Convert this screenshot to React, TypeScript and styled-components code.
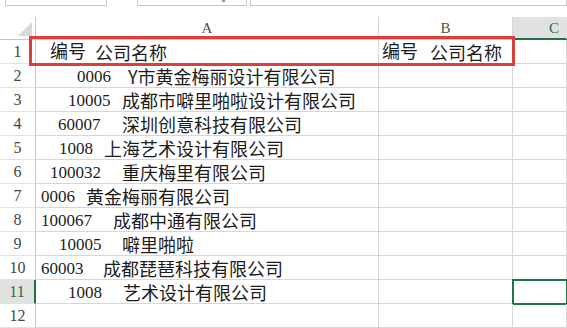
import React from 'react';
import styled, { createGlobalStyle } from 'styled-components';

const GlobalStyle = createGlobalStyle`
  html, body {
    margin: 0;
    padding: 0;
    background: #ffffff;
    overflow: hidden;
  }
`;

const green = '#217346';
const gridLine = '#d6d6d8';

const Page = styled.div`
  width: 567px;
  height: 328px;
  overflow: hidden;
  background: #ffffff;
  display: flex;
  flex-direction: column;
`;

const FormulaStrip = styled.div`
  display: flex;
  height: 6px;
  margin-bottom: 11px;
  flex-shrink: 0;
`;

const BarBox = styled.div<{ $left: number; $width?: number }>`
  margin-left: ${(p) => p.$left}px;
  width: ${(p) => (p.$width ? `${p.$width}px` : 'auto')};
  flex: ${(p) => (p.$width ? '0 0 auto' : '1')};
  border: 1px solid #c8c8c8;
  border-top: none;
  box-sizing: border-box;
  display: flex;
  align-items: flex-start;
`;

const Grip = styled.span`
  margin-left: 84px;
  width: 3px;
  height: 2px;
  background: #9a9a9a;
`;

const Sheet = styled.div`
  position: relative;
  display: grid;
  grid-template-columns: 36px 343px 134px 1fr;
  grid-template-rows: 23px repeat(12, 24px);
`;

const Corner = styled.div`
  border-right: 1px solid #c6c6c6;
  border-bottom: 1px solid #c6c6c6;
  box-sizing: border-box;
  display: flex;
  align-items: flex-end;
  justify-content: flex-end;
  padding: 0 2px 2px 0;
`;

const ColHeader = styled.div<{ $active?: boolean }>`
  box-sizing: border-box;
  background: ${(p) => (p.$active ? '#e1e1e1' : '#ffffff')};
  border-right: 1px solid ${(p) => (p.$active ? '#e1e1e1' : '#d4d4d4')};
  border-bottom: ${(p) => (p.$active ? `2px solid ${green}` : '1px solid #c6c6c6')};
  color: ${(p) => (p.$active ? green : '#505050')};
  font-family: 'Liberation Serif', serif;
  font-size: 15px;
  display: flex;
  align-items: flex-end;
  justify-content: ${(p) => (p.$active ? 'flex-start' : 'center')};
  padding: 0 0 ${(p) => (p.$active ? 2 : 3)}px ${(p) => (p.$active ? 36 : 0)}px;
  line-height: 1;
`;

const RowHeader = styled.div<{ $active?: boolean }>`
  box-sizing: border-box;
  background: ${(p) => (p.$active ? '#e1e1e1' : '#ffffff')};
  border-right: ${(p) => (p.$active ? `2px solid ${green}` : '1px solid #c6c6c6')};
  border-bottom: 1px solid #e2e2e2;
  color: ${(p) => (p.$active ? green : '#454545')};
  font-family: 'Liberation Serif', serif;
  font-size: 16px;
  display: flex;
  align-items: center;
  justify-content: center;
  padding-top: 1px;
`;

const Cell = styled.div<{ $selected?: boolean }>`
  position: relative;
  box-sizing: border-box;
  border-right: 1px solid ${gridLine};
  border-bottom: 1px solid ${gridLine};
  display: flex;
  align-items: center;
  white-space: nowrap;
  color: #1c1c1c;
  padding-top: 1px;

  &::after {
    content: '';
    display: ${(p) => (p.$selected ? 'block' : 'none')};
    position: absolute;
    top: -1px;
    left: -1px;
    right: -2px;
    bottom: -2px;
    border: 2px solid ${green};
  }
`;

const Num = styled.span<{ $x: number; $w: number; $size?: number }>`
  margin-left: ${(p) => p.$x}px;
  width: ${(p) => p.$w}px;
  flex-shrink: 0;
  font-family: 'Liberation Serif', 'Noto Sans CJK SC', serif;
  font-size: ${(p) => p.$size ?? 17}px;
  line-height: 1;
`;

const Name = styled.span`
  font-family: 'Noto Sans CJK SC', 'Liberation Serif', sans-serif;
  font-size: 18px;
  line-height: 1;
`;

const Highlight = styled.div`
  position: absolute;
  left: 29px;
  top: 19px;
  width: 486px;
  height: 30px;
  box-sizing: border-box;
  border: 3px solid #d6413e;
  pointer-events: none;
`;

type Row = { n: string; name: string; x: number; w: number };

const rows: Row[] = [
  { n: '编号', name: '公司名称', x: 14, w: 45 },
  { n: '0006', name: 'Y市黄金梅丽设计有限公司', x: 41, w: 51 },
  { n: '10005', name: '成都市噼里啪啦设计有限公司', x: 32, w: 54 },
  { n: '60007', name: '深圳创意科技有限公司', x: 22, w: 64 },
  { n: '1008', name: '上海艺术设计有限公司', x: 23, w: 45 },
  { n: '100032', name: '重庆梅里有限公司', x: 14, w: 72 },
  { n: '0006', name: '黄金梅丽有限公司', x: 5, w: 45 },
  { n: '100067', name: '成都中通有限公司', x: 5, w: 72 },
  { n: '10005', name: '噼里啪啦', x: 23, w: 63 },
  { n: '60003', name: '成都琵琶科技有限公司', x: 5, w: 62 },
  { n: '1008', name: '艺术设计有限公司', x: 32, w: 55 },
  { n: '', name: '', x: 0, w: 0 },
];

const SelectAll = () => (
  <svg width="15" height="15" viewBox="0 0 15 15">
    <polygon points="14,0 14,14 0,14" fill="#d8d8d8" />
  </svg>
);

const App = (): React.ReactElement => {
  return (
    <Page>
      <GlobalStyle />
      <FormulaStrip>
        <BarBox $left={5} $width={102} />
        <BarBox $left={30} $width={110}>
          <Grip />
        </BarBox>
        <BarBox $left={3} />
      </FormulaStrip>
      <Sheet>
        <Corner>
          <SelectAll />
        </Corner>
        <ColHeader>A</ColHeader>
        <ColHeader>B</ColHeader>
        <ColHeader $active>C</ColHeader>
        {rows.map((r, i) => (
          <React.Fragment key={i}>
            <RowHeader $active={i === 10}>{i + 1}</RowHeader>
            <Cell>
              {r.n && (
                <>
                  <Num $x={r.x} $w={r.w} $size={i === 0 ? 18 : 17}>
                    {r.n}
                  </Num>
                  <Name>{r.name}</Name>
                </>
              )}
            </Cell>
            <Cell>
              {i === 0 && (
                <>
                  <Num $x={3} $w={48} $size={18}>
                    编号
                  </Num>
                  <Name>公司名称</Name>
                </>
              )}
            </Cell>
            <Cell $selected={i === 10} />
          </React.Fragment>
        ))}
        <Highlight />
      </Sheet>
    </Page>
  );
};

export default App;
